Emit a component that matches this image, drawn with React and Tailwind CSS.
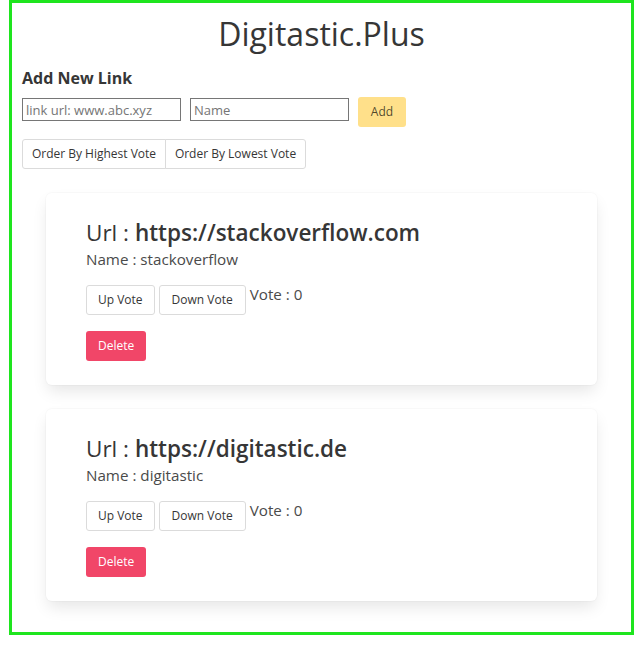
import React, { useState } from "react";

const initialLinks = [
  { id: 1, url: "https://stackoverflow.com", name: "stackoverflow", votes: 0 },
  { id: 2, url: "https://digitastic.de", name: "digitastic", votes: 0 },
];

const LinkCard = ({ link, onVote, onDelete }) => (
  <div className="mx-[24px] mb-[24px] rounded-md bg-white pt-[26px] pb-[24px] px-10 shadow-[0_8px_16px_-2px_rgba(10,10,10,0.1),0_0_0_1px_rgba(10,10,10,0.02)]">
    <p className="text-[22.5px] leading-[27px] text-[#363636]">
      Url : <span className="font-semibold">{link.url}</span>
    </p>
    <p className="mt-[1px] text-[15.2px] leading-[24px] text-[#4a4a4a]">
      Name : {link.name}
    </p>
    <div className="mt-[14px] flex items-start gap-[4px]">
      <button
        onClick={() => onVote(link.id, 1)}
        className="h-[30px] rounded-[3px] border border-[#dbdbdb] bg-white px-[11px] text-[12px] text-[#363636]"
      >
        Up Vote
      </button>
      <button
        onClick={() => onVote(link.id, -1)}
        className="h-[30px] rounded-[3px] border border-[#dbdbdb] bg-white px-[12px] text-[12px] text-[#363636]"
      >
        Down Vote
      </button>
      <span className="-mt-[3px] text-[15.2px] leading-[24px] text-[#4a4a4a]">
        Vote : {link.votes}
      </span>
    </div>
    <button
      onClick={() => onDelete(link.id)}
      className="mt-[16px] h-[30px] rounded-[3px] bg-[#f14668] px-[12px] text-[12px] text-white"
    >
      Delete
    </button>
  </div>
);

export default function App() {
  const [links, setLinks] = useState(initialLinks);
  const [url, setUrl] = useState("");
  const [name, setName] = useState("");

  const vote = (id, d) =>
    setLinks(links.map((l) => (l.id === id ? { ...l, votes: l.votes + d } : l)));
  const remove = (id) => setLinks(links.filter((l) => l.id !== id));
  const add = () => {
    if (!url) return;
    setLinks([...links, { id: Date.now(), url, name, votes: 0 }]);
    setUrl("");
    setName("");
  };
  const sortBy = (dir) =>
    setLinks([...links].sort((a, b) => (b.votes - a.votes) * dir));

  return (
    <div
      className="ml-[9px] w-[625px] border-[3px] border-[#1ee51e] bg-white px-[10px] pb-[7px]"
      style={{ fontFamily: '"Open Sans", "Noto Sans", sans-serif' }}
    >
      <h1 className="pt-[13px] text-center text-[32px] leading-[36px] text-[#363636]">
        Digitastic.Plus
      </h1>
      <h3 className="mt-[16px] text-[16px] font-bold leading-[20px] text-[#363636]">
        Add New Link
      </h3>
      <div className="mt-[9px] flex items-start gap-[9px]">
        <input
          value={url}
          onChange={(e) => setUrl(e.target.value)}
          placeholder="link url: www.abc.xyz"
          className="mt-[1px] h-[23px] w-[159px] border border-[#767676] px-[3px] text-[13px] placeholder:text-[#757575]"
        />
        <input
          value={name}
          onChange={(e) => setName(e.target.value)}
          placeholder="Name"
          className="mt-[1px] h-[23px] w-[159px] border border-[#767676] px-[3px] text-[13px] placeholder:text-[#757575]"
        />
        <button
          onClick={add}
          className="h-[30px] w-[48px] rounded-[3px] bg-[#ffe08a] text-[12px] text-[rgba(0,0,0,0.7)]"
        >
          Add
        </button>
      </div>
      <div className="mt-[12px] flex">
        <button
          onClick={() => sortBy(1)}
          className="h-[30px] w-[144px] rounded-l-[3px] border border-[#dbdbdb] bg-white text-[12px] text-[#363636]"
        >
          Order By Highest Vote
        </button>
        <button
          onClick={() => sortBy(-1)}
          className="-ml-px h-[30px] w-[141px] rounded-r-[3px] border border-[#dbdbdb] bg-white text-[12px] text-[#363636]"
        >
          Order By Lowest Vote
        </button>
      </div>
      <div className="mt-[24px]">
        {links.map((l) => (
          <LinkCard key={l.id} link={l} onVote={vote} onDelete={remove} />
        ))}
      </div>
    </div>
  );
}
